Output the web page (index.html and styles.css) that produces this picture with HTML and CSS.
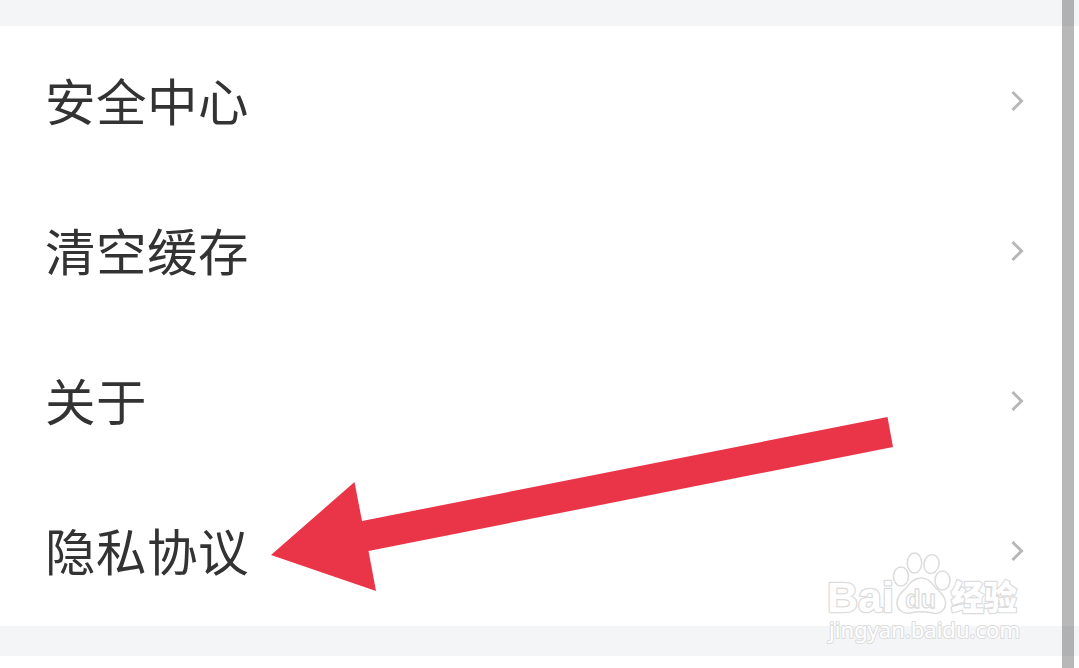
FILE: index.html
```
<!DOCTYPE html>
<html lang="zh-CN">
<head>
  <meta charset="UTF-8">
  <title>设置</title>
  <link rel="stylesheet" href="styles.css">
</head>
<body>
  <div class="page">
    <div class="gap gap-top"></div>
    <ul class="menu">
      <li class="item">
        <span class="label">安全中心</span>
        <svg class="chevron" viewBox="0 0 14 22"><path d="M2.500 2L11.500 11L2.500 20"/></svg>
      </li>
      <li class="item">
        <span class="label">清空缓存</span>
        <svg class="chevron" viewBox="0 0 14 22"><path d="M2.500 2L11.500 11L2.500 20"/></svg>
      </li>
      <li class="item">
        <span class="label">关于</span>
        <svg class="chevron" viewBox="0 0 14 22"><path d="M2.500 2L11.500 11L2.500 20"/></svg>
      </li>
      <li class="item">
        <span class="label">隐私协议</span>
        <svg class="chevron" viewBox="0 0 14 22"><path d="M2.500 2L11.500 11L2.500 20"/></svg>
      </li>
    </ul>
    <div class="gap"></div>

    <div class="scrollbar"></div>

    <svg class="arrow" viewBox="0 0 622 174">
      <polygon points="0,138 83.500,65 91,104 616.500,0 622,30 97.500,134 105,174"/>
    </svg>

    <svg class="watermark" viewBox="0 0 200 100">
      <g class="outline">
        <text class="brand" x="8" y="72" textLength="67" lengthAdjust="spacingAndGlyphs">Bai</text>
        <!-- paw -->
        <ellipse cx="82" cy="36.500" rx="7.500" ry="9.500"/>
        <ellipse cx="95.500" cy="23" rx="7.200" ry="10"/>
        <ellipse cx="112.500" cy="24" rx="7.500" ry="9.500" transform="rotate(12 112.500 24)"/>
        <ellipse cx="123.500" cy="40.500" rx="7.500" ry="9.500"/>
        <path d="M102 38C95 38 91 43 87 48C82 53 78 56 78 63C78 70 84 74 91 73C98 71.500 107 71.500 113 73C121 75 127 70 126.500 62C126 55 120 52 116 47C112 42 109 38 102 38Z"/>
        <text class="du" x="86" y="68" textLength="31" lengthAdjust="spacingAndGlyphs">du</text>
        <text class="brand-cn" x="132" y="70" textLength="66" lengthAdjust="spacingAndGlyphs">经验</text>
      </g>
      <text class="site" x="10" y="98" textLength="191" lengthAdjust="spacingAndGlyphs">jingyan.baidu.com</text>
    </svg>
  </div>
</body>
</html>
```
FILE: styles.css
```
* {
  box-sizing: border-box;
}

body {
  margin: 0;
  background-color: #fff;
  font-family: "Noto Sans CJK SC", sans-serif;
  overflow: hidden;
}

.page {
  position: relative;
  height: 668px;
}

.gap {
  height: 30px;
  background-color: #f4f5f7;
}

.gap-top {
  height: 26px;
}

.menu {
  margin: 0;
  padding: 0;
  list-style: none;
}

.item {
  display: flex;
  align-items: center;
  justify-content: space-between;
  height: 150px;
  padding: 0 55px 0 45px;
}

.label {
  color: #333;
  font-size: 50.5px;
  line-height: 72px;
  letter-spacing: 0.5px;
  padding-bottom: 5px;
}

.chevron {
  width: 14px;
  height: 22px;
  fill: none;
  stroke: #b7b7b7;
  stroke-width: 3;
}

.scrollbar {
  position: absolute;
  top: 0;
  right: 5px;
  width: 12px;
  height: 100%;
  background-color: rgba(0, 0, 0, 0.28);
}

.arrow {
  position: absolute;
  left: 271px;
  top: 417px;
  width: 622px;
  height: 174px;
  fill: #ea3548;
}

.watermark {
  position: absolute;
  left: 819px;
  top: 540px;
  width: 200px;
  height: 100px;
  overflow: visible;
}

.outline {
  fill: #fff;
  stroke: #dcdcdc;
  stroke-width: 1.5;
}

.brand,
.du {
  font-family: "Liberation Sans", Arial, sans-serif;
}

.brand {
  font-size: 43px;
  font-weight: bold;
  stroke-width: 2.6;
  stroke-linejoin: round;
  paint-order: stroke;
}

.du {
  font-size: 26px;
  font-weight: bold;
  stroke-width: 1.3;
}

.brand-cn {
  font-size: 34px;
  font-weight: 900;
  stroke-width: 2.4;
  stroke-linejoin: round;
  paint-order: stroke;
}

.site {
  font-family: "Noto Sans", sans-serif;
  font-size: 22px;
  fill: #fff;
  stroke: #dcdcdc;
  stroke-width: 2;
  stroke-linejoin: round;
  paint-order: stroke;
}
```
